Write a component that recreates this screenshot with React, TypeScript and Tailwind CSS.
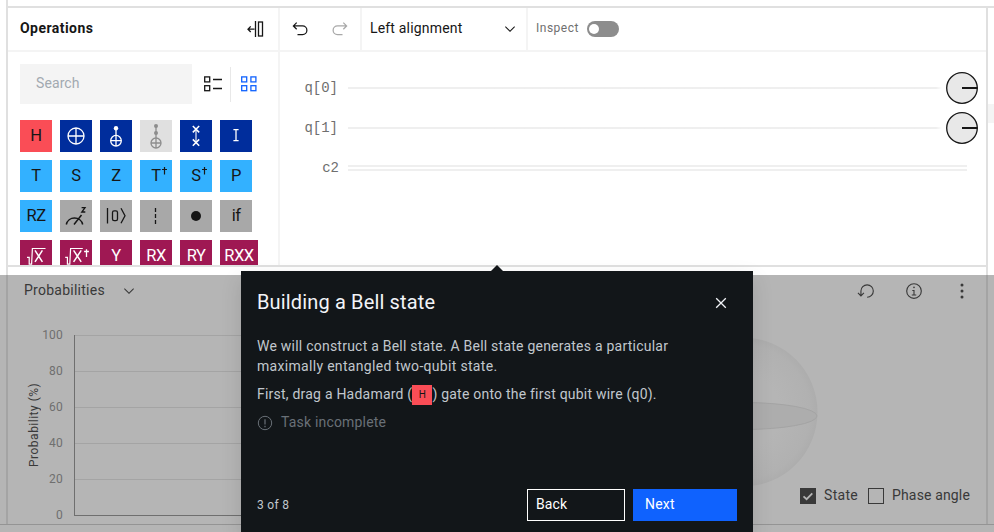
import React from "react";

const GRID = [100, 80, 60, 40, 20, 0];

function Chevron({ className = "" }: { className?: string }) {
  return (
    <svg viewBox="0 0 16 16" className={`h-4 w-4 shrink-0 ${className}`} fill="currentColor">
      <path d="M8 11L3 6l.7-.7L8 9.6l4.3-4.3.7.7z" />
    </svg>
  );
}

function Undo({ className = "" }: { className?: string }) {
  return (
    <svg viewBox="0 0 32 32" className={`h-5 w-5 ${className}`} fill="currentColor">
      <path d="M20,10H7.8149l3.5874-3.5859L10,5,4,11,10,17l1.4023-1.4146L7.8179,12H20a6,6,0,0,1,0,12H12v2h8a8,8,0,0,0,0-16Z" />
    </svg>
  );
}

function Glyph({ children }: { children: React.ReactNode }) {
  return (
    <svg viewBox="0 0 32 32" className="h-8 w-8 shrink-0" fill="none" stroke="currentColor" strokeWidth="1.3">
      {children}
    </svg>
  );
}

function Dagger({ letter }: { letter: string }) {
  return (
    <span className="relative">
      {letter}
      <svg viewBox="0 0 5 8" className="absolute -right-[6px] top-[3px] h-[8px] w-[5px]" stroke="currentColor" strokeWidth="1.2">
        <path d="M2.5 0V7.5M0 2.5H5" />
      </svg>
    </span>
  );
}

const NAVY = "bg-[#002d9c] text-white";
const SKY = "bg-[#33b1ff] text-[#161616]";
const GREY = "bg-[#a8a8a8] text-[#161616]";
const PLUM = "bg-[#9f1853] text-white";

const gates: { id: string; tone: string; body: React.ReactNode }[] = [
  { id: "h", tone: "bg-[#fa4d56] text-[#161616]", body: "H" },
  {
    id: "x", tone: NAVY,
    body: <Glyph><circle cx="16" cy="16" r="8" /><path d="M16 8V24M8 16H24" /></Glyph>,
  },
  {
    id: "cx", tone: NAVY,
    body: <Glyph><circle cx="16" cy="20.7" r="5.3" /><path d="M16 8V26M10.7 20.7H21.3" /><circle cx="16" cy="8.2" r="2.2" fill="currentColor" stroke="none" /></Glyph>,
  },
  {
    id: "ccx", tone: "bg-[#e0e0e0] text-[#8d8d8d]",
    body: <Glyph><circle cx="16" cy="23" r="5" /><path d="M16 6V28M11 23H21" /><circle cx="16" cy="6" r="2" fill="currentColor" stroke="none" /><circle cx="16" cy="13" r="2" fill="currentColor" stroke="none" /></Glyph>,
  },
  {
    id: "swap", tone: NAVY,
    body: <Glyph><path d="M16 9V23" strokeWidth="1.1" /><path d="M12.8 6L19.2 12.4M19.2 6L12.8 12.4M12.8 19.4L19.2 25.8M19.2 19.4L12.8 25.8" strokeWidth="1.5" /></Glyph>,
  },
  {
    id: "i", tone: NAVY,
    body: <Glyph><path d="M13.4 9.6H18.6M16 9.6V20.6M13.4 20.6H18.6" strokeWidth="1.3" /></Glyph>,
  },
  { id: "t", tone: SKY, body: "T" },
  { id: "s", tone: SKY, body: "S" },
  { id: "z", tone: SKY, body: "Z" },
  { id: "tdg", tone: SKY, body: <Dagger letter="T" /> },
  { id: "sdg", tone: SKY, body: <Dagger letter="S" /> },
  { id: "p", tone: SKY, body: "P" },
  { id: "rz", tone: SKY, body: "RZ" },
  {
    id: "measure", tone: GREY,
    body: <Glyph><path d="M6.3 24.5A8.4 8.4 0 0 1 22.7 24.5M14 24.5L21.5 15" strokeWidth="1.5" /><path d="M21.6 7.7H25L21.8 12H25.3" strokeWidth="1.3" /></Glyph>,
  },
  {
    id: "reset", tone: GREY,
    body: <Glyph><path d="M7.5 8V23.5M21 8.2L25 15.7L21 23.2" /><rect x="12.5" y="10.8" width="5" height="9.8" rx="1.6" /></Glyph>,
  },
  {
    id: "barrier", tone: GREY,
    body: <Glyph><path d="M15.5 8V24" strokeDasharray="4 2" /></Glyph>,
  },
  {
    id: "control", tone: GREY,
    body: <Glyph><circle cx="16" cy="16" r="5" fill="currentColor" stroke="none" /></Glyph>,
  },
  { id: "if", tone: GREY, body: "if" },
  {
    id: "sx", tone: PLUM,
    body: <Glyph><path d="M7 17.3H9.2V24.2H11.6L12.4 8.5H25.5" strokeWidth="1.2" /><path d="M15 10.4L22.4 21.9M22.4 10.4L15 21.9" strokeWidth="1.5" /></Glyph>,
  },
  {
    id: "sxdg", tone: PLUM,
    body: <Glyph><path d="M5.2 17.3H7.4V24.2H9.8L10.6 8.5H22.8" strokeWidth="1.2" /><path d="M13.6 10.4L21.2 21.9M21.2 10.4L13.6 21.9" strokeWidth="1.5" /><path d="M26.5 9.3V17M24.1 11.5H28.9" strokeWidth="1.3" /></Glyph>,
  },
  { id: "y", tone: PLUM, body: "Y" },
  { id: "rx", tone: PLUM, body: "RX" },
  { id: "ry", tone: PLUM, body: "RY" },
  { id: "rxx", tone: PLUM, body: "RXX" },
];

function PhaseDisk() {
  return (
    <svg viewBox="0 0 32 32" className="h-8 w-8 shrink-0">
      <circle cx="16" cy="16" r="15.3" fill="#e8e8e8" stroke="#161616" strokeWidth="1.3" />
      <path d="M16 16H31.5" stroke="#161616" strokeWidth="2" />
    </svg>
  );
}

function Wire({ label }: { label: string }) {
  return (
    <div className="flex h-10 items-center">
      <span className="w-[58px] shrink-0 text-right font-['Liberation_Mono',monospace] text-[14px] text-[#6f6f6f]">{label}</span>
      <div className="ml-[10px] h-[2px] w-[594px] bg-linear-to-r from-[#efefef] from-99% to-white" />
      <div className="ml-1">
        <PhaseDisk />
      </div>
    </div>
  );
}

function OperationsPanel() {
  return (
    <section className="flex w-[272px] shrink-0 flex-col border-r-2 border-[#f4f4f4]">
      <header className="flex h-11 shrink-0 items-center justify-between border-b-2 border-[#f4f4f4] pl-3 pr-[14px]">
        <h2 className="pb-[2px] text-[14px] font-bold tracking-[0.45px] text-[#161616]">Operations</h2>
        <svg viewBox="0 0 17 16" className="h-4 w-[17px]" fill="none" stroke="#161616" strokeWidth="1.3">
          <path d="M8.5 0V16M7.5 8.2H1.2M3.7 5.4L1 8.2L3.7 11" />
          <rect x="11.5" y="1" width="4" height="14" />
        </svg>
      </header>
      <div className="flex shrink-0 items-center pl-3 pt-3">
        <div className="flex h-10 w-[172px] items-center bg-[#f4f4f4] px-4 pb-[2px] text-[14px] tracking-[0.1px] text-[#a2a9b0]">Search</div>
        <svg viewBox="0 0 18 16" className="ml-3 h-4 w-[18px]" fill="none" stroke="#161616" strokeWidth="1.3">
          <rect x="0.7" y="0.9" width="5" height="5" /><rect x="0.7" y="9.7" width="5" height="5" />
          <path d="M9 3.5H18M9 12.5H18" />
        </svg>
        <div className="ml-2 h-[35px] w-px bg-[#e8e8e8]" />
        <svg viewBox="0 0 16 16" className="ml-[10px] h-4 w-4" fill="none" stroke="#0f62fe" strokeWidth="1.3">
          <rect x="0.7" y="0.9" width="5" height="5" /><rect x="9.9" y="0.9" width="5" height="5" />
          <rect x="0.7" y="9.7" width="5" height="5" /><rect x="9.9" y="9.7" width="5" height="5" />
        </svg>
      </div>
      <div className="flex shrink-0 flex-wrap gap-2 pl-3 pt-4">
        {gates.map((g) => (
          <div
            key={g.id}
            className={`flex h-8 items-center justify-center text-[16.5px] leading-6 tracking-[-0.5px] ${g.id === "rxx" ? "w-[38px]" : "w-8"} ${g.tone}`}
          >
            {g.body}
          </div>
        ))}
      </div>
    </section>
  );
}

function CircuitPanel() {
  return (
    <section className="flex min-w-0 flex-1 flex-col">
      <header className="flex h-11 shrink-0 border-b-2 border-[#f4f4f4]">
        <div className="flex w-[82px] items-center gap-5 border-r-2 border-[#f4f4f4] pl-[10px]">
          <Undo className="text-[#161616]" />
          <Undo className="-scale-x-100 text-[#a8a8a8]" />
        </div>
        <div className="flex w-[166px] items-center justify-between border-r-2 border-[#f4f4f4] pl-2 pr-2 text-[14px] text-[#161616]">
          <span className="pb-[2px] tracking-[0.18px]">Left alignment</span>
          <Chevron />
        </div>
        <div className="flex items-center gap-2 pl-2">
          <span className="pb-[2px] text-[12px] tracking-[0.5px] text-[#6f6f6f]">Inspect</span>
          <div className="flex h-4 w-8 items-center rounded-full bg-[#8d8d8d] px-[2px]">
            <div className="h-[10px] w-[10px] rounded-full bg-white" />
          </div>
        </div>
      </header>
      <div className="pt-4">
        <Wire label="q[0]" />
        <Wire label="q[1]" />
        <div className="flex h-10 items-center">
          <span className="w-[59px] text-right font-['Liberation_Mono',monospace] text-[14px] text-[#6f6f6f]">c2</span>
          <div className="ml-[9px] h-[6px] w-[619px] border-y-2 border-[#efefef]" />
        </div>
      </div>
    </section>
  );
}

function ProbabilitiesPanel() {
  return (
    <section className="w-[480px] shrink-0">
      <div className="flex h-[46px] items-center gap-4 pl-4 text-[14px] tracking-[0.25px] text-[#393939]">
        Probabilities
        <Chevron className="mt-[2px]" />
      </div>
      <div className="flex pt-3">
        <div className="flex w-[35px] justify-end pt-[10px]">
          <div className="flex h-[180px] rotate-180 items-center justify-center pr-[2px] text-[12px] tracking-[0.5px] text-[#393939] [writing-mode:vertical-rl]">
            Probability (%)
          </div>
        </div>
        <div className="w-5 text-right text-[12px] tracking-[0.2px] text-[#6f6f6f]">
          {GRID.map((n) => (
            <div key={n} className="-ml-2 flex h-9 items-start justify-end leading-5">{n}</div>
          ))}
        </div>
        <div className="ml-[11px] mt-[10px] h-[181px] w-[380px] border-b border-l border-[#6f6f6f]">
          {GRID.slice(0, 5).map((n) => (
            <div key={n} className="h-9 border-t border-[#a4a4a4]" />
          ))}
        </div>
      </div>
    </section>
  );
}

function SpherePanel() {
  return (
    <section className="flex flex-1 flex-col text-[#393939]">
      <div className="flex h-12 items-center justify-end gap-[30px] pr-[15px]">
        <svg viewBox="0 0 32 32" className="h-[18px] w-[18px]" fill="currentColor">
          <path d="M18,28A12,12,0,1,0,6,16v6.2L2.4,18.6,1,20l6,6,6-6-1.4-1.4L8,22.2V16H8A10,10,0,1,1,18,26Z" />
        </svg>
        <svg viewBox="0 0 32 32" className="h-[18px] w-[18px]" fill="currentColor">
          <path d="M17 22V14H13V16H15V22H12V24H20V22ZM16 8a1.5 1.5 0 1 0 1.5 1.5A1.5 1.5 0 0 0 16 8Z" />
          <path d="M16 30A14 14 0 1 1 30 16 14 14 0 0 1 16 30ZM16 4A12 12 0 1 0 28 16 12 12 0 0 0 16 4Z" />
        </svg>
        <svg viewBox="0 0 18 18" className="h-[18px] w-[18px]" fill="currentColor">
          <circle cx="9" cy="3" r="1.5" /><circle cx="9" cy="9" r="1.5" /><circle cx="9" cy="15" r="1.5" />
        </svg>
      </div>
      <svg viewBox="0 0 150 150" className="-mb-[2px] ml-[180px] mt-[22px] h-[150px] w-[150px] shrink-0">
        <defs>
          <radialGradient id="ball">
            <stop offset="0.5" stopColor="#b5b5b5" />
            <stop offset="0.9" stopColor="#b1b1b1" />
            <stop offset="1" stopColor="#adadad" />
          </radialGradient>
        </defs>
        <circle cx="75" cy="75" r="74.5" fill="url(#ball)" />
        <ellipse cx="75" cy="79" rx="74" ry="13.5" fill="#adadad" stroke="#a4a4a4" />
      </svg>
      <div className="flex items-center justify-end pr-4 text-[14px]">
        <svg viewBox="0 0 16 16" className="h-4 w-4">
          <rect width="16" height="16" fill="#393939" />
          <path d="M3.5 8.3L6.6 11.2L12.3 5.4" fill="none" stroke="#b5b5b5" strokeWidth="1.8" />
        </svg>
        <span className="ml-2 tracking-[0.3px]">State</span>
        <div className="ml-[10px] h-4 w-4 border border-[#393939]" />
        <span className="ml-2 tracking-[0.15px]">Phase angle</span>
      </div>
    </section>
  );
}

function TourCard() {
  return (
    <aside className="absolute left-[241px] top-[271px] flex h-[261px] w-[512px] flex-col bg-[#121619] px-4 text-[#c1c7cd] shadow-[0_8px_20px_rgba(0,0,0,0.12)]">
      <svg viewBox="0 0 12 6" className="absolute left-[250px] -top-[6px] h-[6px] w-[12px]" fill="#121619">
        <path d="M0 6L6 0L12 6Z" />
      </svg>
      <div className="flex h-[65px] items-center justify-between pr-[10px]">
        <h3 className="pb-1 text-[20px] tracking-[0.15px] text-[#f2f4f8]">Building a Bell state</h3>
        <svg viewBox="0 0 12 12" className="mb-px h-3 w-3" stroke="#f2f4f8" strokeWidth="1.3">
          <path d="M1.2 1.2L10.8 10.8M10.8 1.2L1.2 10.8" />
        </svg>
      </div>
      <div className="text-[14px] leading-5">
        <p className="whitespace-nowrap tracking-[0.23px]">
          We will construct a Bell state. A Bell state generates a particular
          <br />
          <span className="tracking-[0.31px]">maximally entangled two-qubit state.</span>
        </p>
        <p className="mt-2 flex h-5 whitespace-nowrap tracking-[0.22px]">
          First, drag a Hadamard (
          <span className="mt-px flex h-5 w-5 items-center justify-center bg-[#fa4d56] text-[10px] text-[#161616]">H</span>
          ) gate onto the first qubit wire (q0).
        </p>
        <div className="mt-2 flex h-5 items-center text-[#697077]">
          <svg viewBox="0 0 16 16" className="mt-[2px] h-4 w-4" fill="none" stroke="currentColor">
            <circle cx="8" cy="8" r="6.7" />
            <path d="M8 4.3V9.5M8 10.8V12.2" strokeWidth="1.2" />
          </svg>
          <span className="ml-2 tracking-[0.18px]">Task incomplete</span>
        </div>
      </div>
      <div className="mt-auto mb-[11px] flex h-8 items-center">
        <span className="flex-1 text-[12px] tracking-[0.3px]">3 of 8</span>
        <button className="h-8 w-[98px] border border-white pb-[2px] pl-2 text-left text-[14px] tracking-[0.1px] text-white">Back</button>
        <button className="ml-2 h-8 w-[104px] bg-[#0f62fe] pb-[2px] pl-3 text-left text-[14px] tracking-[0.2px] text-white">Next</button>
      </div>
    </aside>
  );
}

export default function App() {
  return (
    <div className="relative flex h-[532px] w-[994px] flex-col overflow-hidden bg-white font-[Roboto,sans-serif]">
      <div className="ml-[6px] h-2 shrink-0 border-b-2 border-l-2 border-[#e0e0e0]" />
      <div className="flex h-[259px] shrink-0">
        <div className="ml-[6px] flex h-[259px] w-[982px] overflow-hidden border-x-2 border-b-2 border-[#e0e0e0]">
          <OperationsPanel />
          <CircuitPanel />
        </div>
        <div className="mt-24 h-[19px] w-[6px] bg-[#f4f4f4]" />
      </div>
      <div className="ml-[6px] h-2 w-[982px] shrink-0 border-x-2 border-[#e0e0e0]" />
      <div className="flex h-[257px] shrink-0 flex-col bg-[#b5b5b5]">
        <div className="h-[250px] border-b border-[#949494] pl-[6px]">
          <div className="-mt-2 flex h-[257px] w-[982px] border-x-2 border-[#a4a4a4] [clip-path:inset(8px_0_0_0)]">
            <ProbabilitiesPanel />
            <SpherePanel />
          </div>
        </div>
      </div>
      <TourCard />
    </div>
  );
}
